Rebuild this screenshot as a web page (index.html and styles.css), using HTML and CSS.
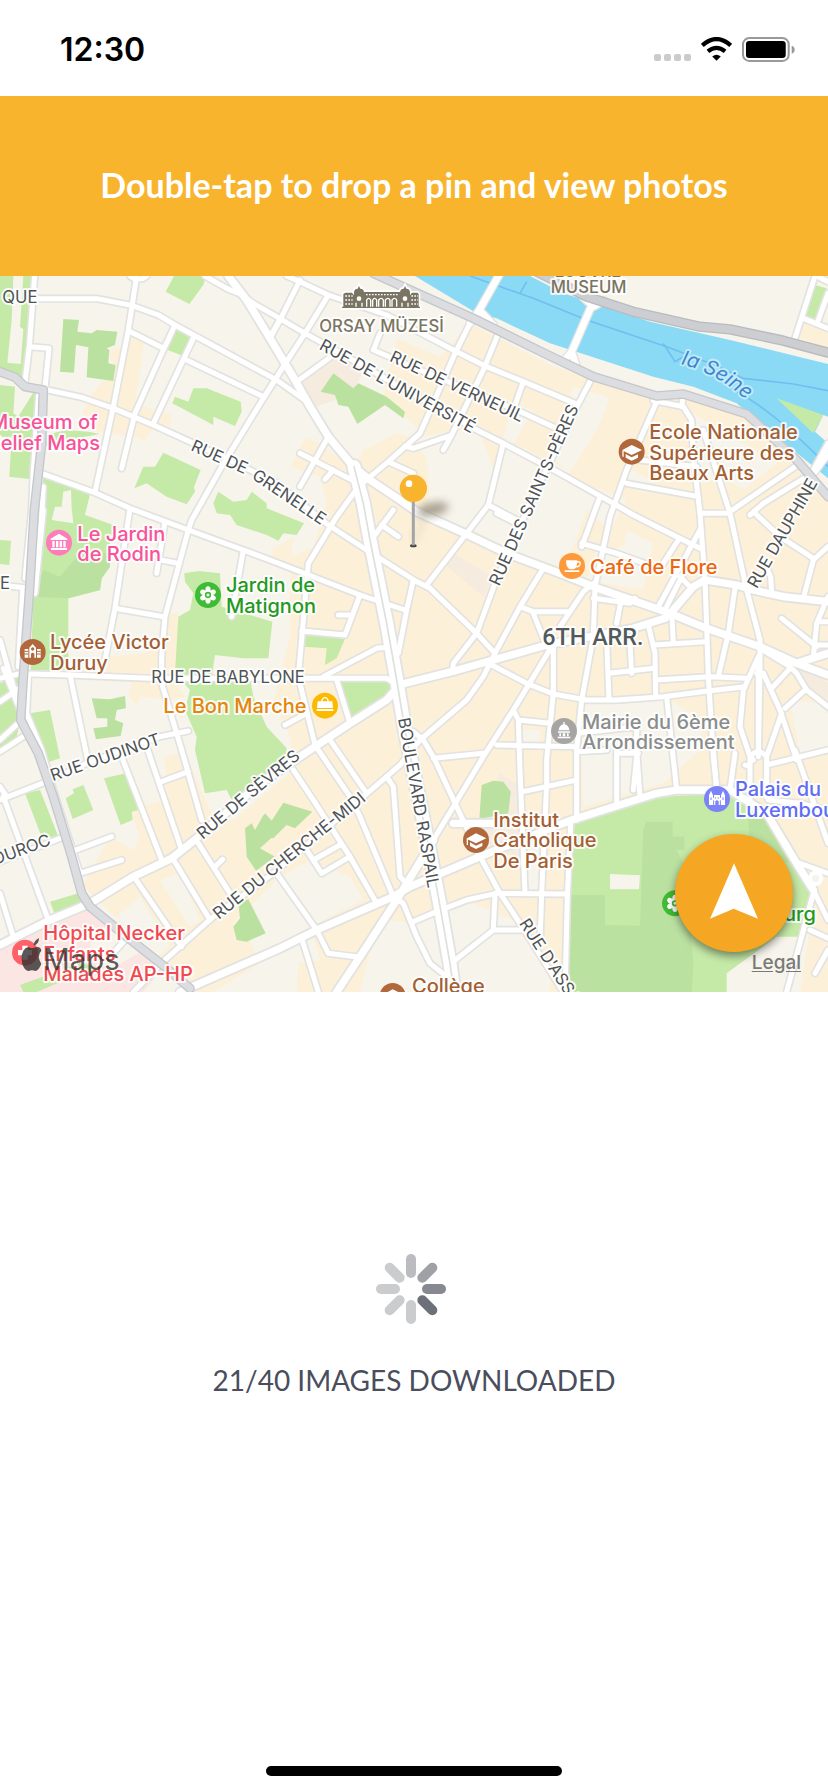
FILE: index.html
```html
<!DOCTYPE html>
<html lang="en">
<head>
<meta charset="utf-8">
<meta name="viewport" content="width=device-width, initial-scale=1">
<title>Map photos</title>
<link rel="stylesheet" href="styles.css">
</head>
<body>
<div class="app">
  <header class="status-bar">
    <time class="clock">12:30</time>
    <div class="status-icons">
      <svg class="icon-signal" viewBox="0 0 37 7" aria-hidden="true"><g fill="#cbcbcb"><rect width="7" height="7" rx="2"/><rect x="10" width="7" height="7" rx="2"/><rect x="20" width="7" height="7" rx="2"/><rect x="30" width="7" height="7" rx="2"/></g></svg>
      <svg class="icon-wifi" viewBox="0 0 94 72" aria-hidden="true"><path d="M4 25Q47-13 90 25M21 43Q47 22 73 43" fill="none" stroke="#000" stroke-width="13"/><path d="M34 59Q47 48 60 59L47 72Z"/></svg>
      <svg class="icon-battery" viewBox="0 0 160 75" aria-hidden="true"><rect x="3" y="3" width="138" height="69" rx="19" fill="none" stroke="#999" stroke-width="6"/><rect x="12" y="12" width="120" height="51" rx="10"/><path d="M150 26Q159 29 159 38T150 50Z" fill="#999"/></svg>
    </div>
  </header>

  <div class="banner"><h1 class="banner-title">Double-tap to drop a pin and view photos</h1></div>

  <section class="map" aria-label="Map">
    <svg class="map-canvas" viewBox="0 18 2484 2148">
      <defs>
        <g id="minor">
          <path d="M104 0V18L88 230 75 335M104 86H290L395 106 475 135 525 165 830 330 910 387M410 18L385 180 340 410 285 665M385 182L490 235M525 165L490 240 405 430 365 595M580 205L460 460M555 268L790 380M90 230L147 235 135 355M117 360L100 600 95 720 75 925M130 650L125 740 103 970M390 18l12 8h26l12-8"/>
          <path d="M135 358L245 382 340 415 460 465 570 515 700 575 830 640 985 765 1100 840 1245 932 1290 955"/>
          <path d="M825 330L790 385 665 590 575 750 565 780 495 1040 485 1160V1240L545 1440 605 1650M110 605L285 668 390 715 565 780 730 840 810 870 1080 975 1215 1020M390 715L345 1015 315 1170M345 1015L490 1040M495 755L470 910M483 870L535 880M730 840L695 1040"/>
          <path d="M615 18L680 55 720 72 760 100 830 140 910 187 960 215 1430 480 1510 520 1680 610 1840 700 1900 735 2030 800 2100 835M840 150L810 205"/>
          <path d="M860 18L900 35 985 75 1160 135 1370 245 1460 290 1570 335 1725 400M900 30L845 140 810 200M985 75L915 190 850 290 790 385M890 335L1000 255M1140 190L1120 240 1260 300 1550 420 1680 480"/>
          <path d="M1415 150L1365 250 1300 400 1260 490 1165 575 1075 650 1010 740 925 880 895 1220 945 1425 1050 1580 1080 1640 1180 1880M1495 190L1450 300 1355 495 1330 540M1355 495L1240 535 1215 528M1570 335L1540 420M1510 520L1465 705 1400 790 1280 945M1465 705L1550 750M1490 730L1540 755M900 550L1075 640M985 500L900 650M1000 600L975 628M1165 575L1240 610"/>
          <path d="M1180 720L1110 815M1145 765L1195 800M1240 930L1220 1020 1195 1150M1080 975L1035 1095 905 1083M1015 1035H1048M1175 1130L1130 1135 970 1220"/>
          <path d="M0 1225L60 1211 210 1215 450 1225 910 1225H1160L1195 1245M1010 1230L1050 1360M855 1365L920 1330"/>
          <path d="M1290 955L1430 1090 1485 1150 1475 1185 1580 1240 1660 1272 1760 1290H1850L1990 1280 2130 1262 2235 1250M1770 335L1720 430 1590 700 1485 940 1430 1090 1360 1180 1358 1200M1630 895L1560 1010 1490 1140 1450 1220 1400 1290 1260 1410 1200 1485 1160 1520 1090 1580 820 1810 640 1940 500 2065 400 2166"/>
          <path d="M1560 1010L1600 1025H1710M1600 1030L1640 1130M1780 940L1750 965 1680 1070M1655 1130L1540 1320 1450 1460 1360 1610 1300 1710M1660 1130V1270L1640 1470V1540L1625 1870 1620 2020M1540 1320L1555 1350 1560 1500 1575 1870M1555 1350L1650 1360M1490 1425L1730 1430M1240 1385L1270 1410 1300 1460 1370 1610 1440 1760 1500 1870 1560 1960 1690 2166M1300 1465L1450 1450M990 1410L1100 1570M880 1500L940 1590 1050 1760 1130 1900"/>
          <path d="M1160 1520L1180 1550 1200 1820 1230 1850M1180 1880L1210 1900 1250 2000 1290 2080 1340 2120M1240 1955L1310 1925 1400 1890 1490 1870 1700 1872M1485 1870L1480 1980H1570M1480 1980L1340 2090M830 1810L950 1980 985 2050 1080 2062M905 2005L955 2166M940 1770L1020 1725M920 1740L965 1810 1050 1760M1570 1565L1730 1530"/>
          <path d="M1970 395L1880 600 1830 740 1785 950 1780 1100 1745 1290 1730 1440V1650M1712 1660L1702 1880 1695 2166M1960 392L2050 410 2075 450 2080 560 2100 730 2115 930 2120 1070 2125 1220 2140 1460 2150 1555M2050 380L2045 410M1800 680L1745 830M1745 820L1850 850 1960 890M1880 640L2095 680M1920 570L2090 590M2110 480L2190 730 2240 960 2280 1110V1200L2275 1460M2190 730H2100M2190 725L2400 580M2484 520L2440 600M2250 735L2290 700 2420 620M2260 725L2340 800 2440 865M2484 830L2440 870 2410 985M2290 870L2312 920 2315 970M2100 780L1975 1010M2050 910L2000 1010M2035 810L1990 880M2040 920L2075 955M1780 985L1890 1000 1905 985M1865 980L1850 1060"/>
          <path d="M2015 1025L2020 1120M1960 1125L2120 1115M1945 1065L1965 1150 1967 1280M1820 1110L1827 1290M1890 1120L1895 1210M1827 1210L1960 1195M1965 1230L2130 1220 2240 1225M2205 955L2185 1090 2155 1220M2345 1045L2450 1130M2484 980L2450 1060 2440 1160M2460 1055H2484M2450 1125H2484M2280 1135L2370 1190 2390 1210 2420 1260 2484 1310M2370 1195L2315 1255M2270 1210H2290L2340 1320 2390 1470M2415 1260L2355 1315M2275 1160L2230 1260 2220 1370 2250 1460 2260 1470M2275 1180V1450M2345 1330L2300 1460M2250 1620V1460Q2275 1430 2300 1460V1580M1900 1560L1910 1460M1920 1580L1910 1440M1850 1600V1440M1850 1450H1915M2000 1280L2030 1560M2190 1560L2205 1450M2140 1440L2150 1560M1730 1390L1910 1370M1910 1370V1440M2385 1440L2484 1720M2300 1485L2484 1440M2235 1485L2250 1490M2305 1590L2400 1600 2484 1620"/>
          <path d="M2445 18L2385 205M2450 18L2484 35M2410 145L2484 175M2484 70L2455 150M2440 1870L2360 2166M2430 1980L2484 2005M2484 2040L2445 2110M2440 1860L2484 1950M2400 1780L2484 1810M1820 1440L1730 1445"/>
          <path d="M85 1220L80 1330 125 1440 160 1560 240 1810M68 960L55 1190M0 945L85 955M130 720L105 970M0 1110L20 1180 60 1320M10 1195L60 1320M0 1295L65 1250M0 1410L65 1350M0 1445L70 1400M210 1215L265 1480M440 1430L545 1740M370 1450L365 1460 485 1770M485 1535L565 1505M565 1383L480 1400 260 1480 140 1535 0 1590M515 1760L630 1950M595 1720L690 1870M645 1790L668 1768M405 1825L545 2030M215 1745L335 1700M240 1810L365 1770M180 1705L0 1775M10 1580L145 1950M0 1870L40 2000M0 1550L20 1580M375 2010L330 2060"/>
        </g>
        <g id="major">
          <path d="M685 18L740 90 810 205 885 330 930 410 985 500 1060 590 1110 630 1200 690 1250 725 1405 795 1520 850 1680 910 1780 950 1910 995 2010 1030 2120 1075 2280 1130 2390 1180 2484 1215M1195 1245L1355 1205 1480 1170 1640 1125 1900 1075 1995 1045 2020 1020 2080 950 2115 930 2210 945 2260 960 2350 980 2484 995M1195 1250L1160 1290 1050 1360 870 1480 780 1540 590 1705 515 1765 400 1820 270 1900 150 1950 0 2025M1490 1660L1360 1660M1300 1710L1190 1890 1080 2060 1010 2166M540 2166L840 2035 950 1980 1180 1880 1230 1850 1440 1760 1650 1675 1715 1650 1970 1570 2030 1560 2190 1560 2300 1630 2390 1780 2440 1860M2390 1180L2484 1150"/>
        </g>
        <path id="raspail" d="M1062 590L1090 700 1110 810 1160 1060 1190 1230 1215 1380 1290 1750 1315 1880 1350 2080 1362 2166"/>
        <path id="quai" d="M0 305L45 322 75 350 130 360 125 520 103 720 88 970 70 1220 62 1350 115 1450 160 1580 215 1760 245 1870 270 1910 380 2000 500 2095 570 2155M1120 10L1420 145 1650 258 1780 320 1970 378 2050 372 2240 432 2390 570 2484 680"/>
        <path id="rive" d="M1600 0L1760 80 1900 125 2100 170 2190 178 2350 212 2484 248"/>
        <path id="bridges" d="M1500 10L1438 120 1410 160M1438 120L1480 165M1780 95L1715 245 1690 275M1715 245L1728 285M1750 82L1780 110 1812 92M2484 550L2440 610"/>
        <path id="seine" d="M2042 282Q2160 312 2250 402L2310 470"/>
        <g id="cap" fill="#fff"><path d="M-29-4L0-20 31-5 0 10Z"/><path d="M-18 7L0 17 19 8V18L0 27-18 18Z"/><path d="M-26-3V15" stroke="#fff" stroke-width="4"/></g>
        <g id="flower"><g fill="#fff"><ellipse cy="-15" rx="8" ry="11"/><ellipse cy="-15" rx="8" ry="11" transform="rotate(60)"/><ellipse cy="-15" rx="8" ry="11" transform="rotate(120)"/><ellipse cy="-15" rx="8" ry="11" transform="rotate(180)"/><ellipse cy="-15" rx="8" ry="11" transform="rotate(240)"/><ellipse cy="-15" rx="8" ry="11" transform="rotate(300)"/><circle r="13"/></g><circle r="7" fill="none" stroke="#3fbb35" stroke-width="5"/></g>
        <filter id="soft" x="-50%" y="-50%" width="200%" height="200%"><feGaussianBlur stdDeviation="12"/></filter>
      </defs>

      <rect class="land" y="18" width="2484" height="2148"/>

      <g class="shops">
        <path d="M1190 205L1320 260 1410 160 1650 285 1960 385 2050 375 2240 440 2484 690V2166H2400L2440 1900 2200 1570 1720 1650 1700 2166H1640L1560 1960 1420 1900 1240 1960 1170 1950 1120 2010 1080 2166H890L895 2080 960 2070 930 1970 830 1830 700 1960 740 1990 780 2080 640 2166H560L500 2090 410 2000 250 1850 260 1820 330 1700 400 1740 420 1700 390 1620 490 1590 500 1500 560 1460 640 1640 700 1650 880 1500 870 1400 820 1300 870 1100 870 860 940 830 980 700 960 620 870 590 915 505 960 520 1060 600 1090 540 1190 490 1230 500 1285 570 1420 740 1500 750 1450 600 1300 520 1150 380Z"/>
        <path d="M390 195L432 220 405 400 515 435 508 475 455 480 435 513 400 500 290 485 250 430 265 385 310 330 345 280 330 270V240L375 230ZM505 1030H535V1250L555 1280 510 1290 420 1280 415 1310 385 1280 395 1235 320 1210 330 1160 430 1150 480 1130ZM490 1460L545 1445 550 1500 500 1510ZM2400 150L2484 190V235L2400 205ZM820 835L880 800 870 900 810 880Z"/>
      </g>
      <path class="land" d="M1720 350L1830 385 1790 480 1700 620 1880 690 1830 780 1760 720 1690 910 1500 840 1440 790 1290 740 1285 600 1260 500 1380 480 1440 490 1480 600 1540 400 1600 420 1540 520 1700 600 1660 560ZM2060 420L2160 480 2330 580 2230 660 2170 620 2100 640 2090 480ZM1880 590L1950 630 1940 670 1870 650ZM1880 780L1960 820 1930 960 1760 930 1790 840 1870 830ZM1740 1300L2000 1285 2100 1350 2110 1430 1990 1540 1750 1610ZM2370 1300L2484 1290V1440L2400 1450ZM1330 2090L1500 1960 1560 1970 1650 2130V2166H1370ZM1240 1970L1320 1950 1370 2120 1290 2060ZM1560 1380H1620V1430H1560ZM1580 1660H1620V1860H1580ZM830 1830L930 1770 1050 1820 1090 1890 950 1960ZM350 1940L420 1880 510 2030 470 2060ZM480 1830L540 1810 600 1950 570 1970Z"/>
      <path fill="#f5ebdf" d="M890 340L1000 260 1090 300 1060 370 950 410 920 400ZM1330 880L1360 850 1480 920 1450 980ZM2390 1210L2410 1185 2484 1240V1330ZM1450 1620L1500 1510 1560 1550 1570 1760 1440 1740Z"/>

      <g class="park">
        <path d="M0 18H40L35 150 22 278 62 282 70 178 60 170 70 18H98L75 330 0 300ZM0 345L45 350 40 430 55 440 105 360 117 365 95 628 28 620 35 500 0 500ZM135 495L200 480 265 485 300 492 200 510 130 530Z"/>
        <path d="M525 180L578 200 550 258 503 240ZM522 18H618L610 45 568 102 497 65ZM517 400L525 380 565 395 580 355H620L722 395 725 425 705 468 640 440V465ZM403 655L430 590H465L490 548 602 600 582 650 585 665 560 703 500 680 440 640ZM640 700L655 665 700 695 740 690 755 665 800 700V715L912 760 890 795 850 790 835 812 800 795 710 765 690 735 650 730Z"/>
        <path d="M130 625L270 672 255 735 340 765 325 850 330 890 305 925 300 960 205 985 205 1200 92 1200 100 980 120 750ZM0 810L33 812 28 885 0 882ZM0 1240L60 1215 62 1350 45 1420 0 1450Z"/>
        <path d="M553 910L595 903 660 910 665 1010 817 1055 805 1165H730L645 1155 635 1220 750 1225 760 1280 800 1370 860 1435 855 1470 780 1540 700 1600 680 1560 615 1570 585 1440 590 1400 555 1320 570 1260 525 1210 535 1040 570 1020 580 970 555 935Z"/>
        <path d="M910 1090L1040 1095 1010 1165 975 1185 980 1135 910 1130ZM1020 1235H1160L1180 1250 1160 1285 1055 1350ZM90 1330L150 1320 180 1465 135 1480 110 1440ZM75 1570L120 1560 175 1700 125 1702ZM312 1525L378 1510 415 1620 395 1625 398 1650 362 1665ZM197 1585L222 1570 218 1558 250 1545 280 1620 218 1647ZM150 1895L240 1868 250 1905 165 1935ZM2285 1130L2385 1170 2370 1182 2290 1150ZM2445 45L2480 55 2450 155 2415 145ZM1712 1660L1970 1580 2190 1570 2300 1630 2440 1860 2400 2000H2330L2180 2110V2166H1700Z"/>
      </g>
      <g class="park-deep">
        <path d="M190 147L237 150 232 185 275 190 290 180 352 185 345 225 320 235 328 240 325 280 347 285 340 333 260 322 265 232 228 225 222 308 180 305ZM1000 310L1060 355 1075 340 1160 380 1215 425 1210 445 1155 405 1072 462 1045 410 1015 405 1005 375 962 365ZM1445 1545L1480 1532 1510 1535 1532 1565 1525 1630 1438 1647ZM275 1285L330 1288 375 1278 378 1315 350 1320 345 1350 370 1360 362 1398 288 1408 280 1375 322 1370V1345H290ZM735 1675L755 1660 770 1690 760 1690 795 1630 840 1680 780 1735 825 1760 768 1802 740 1760ZM790 1635L810 1660 850 1598 937 1625 885 1675 860 1665 820 1705 760 1690ZM700 1970L720 1945 715 1900 745 1888 797 1990 740 2015 710 2010ZM130 900L180 920 240 850 325 850 330 890 305 925 300 960 205 985 100 980Z"/>
        <path d="M1940 1655H2018V1700H2053V1740H2030L2060 1800 2070 1940 2080 2090 2075 2166H1705L1710 1875H1815V1965L1920 1967 1930 1680ZM2245 1640H2300L2390 1780 2250 1770Z"/>
      </g>
      <path class="land" d="M190 665L213 660 215 715 220 760 155 750 165 710 185 710ZM1830 1812L1920 1816 1917 1858H1830Z"/>
      <path fill="#fce6e4" d="M0 2025L260 1905 500 2080 430 2166H0Z"/>
      <path class="land" d="M270 2020L340 1970 430 2040 330 2100 290 2080Z"/>
      <path class="park" d="M60 2145L240 2080 290 2090 110 2166H70Z"/>

      <path fill="#8adaf6" d="M1245 18L1430 130 1490 145 1650 220 1960 320 2080 350 2210 400 2330 500 2484 625V282L2190 210 1950 155 1770 95 1690 70 1590 18Z"/>
      <path class="park" d="M2330 385L2470 435 2440 490Z"/>
      <path class="land" d="M2470 435L2484 440V520L2445 485Z"/>
      <path d="M1410 18L1600 85 1760 150 2000 230 2130 280 2230 325 2380 342 2484 362M1990 220L2025 275 2050 260M2200 360Q2320 420 2484 590M1560 70L1580 35" fill="none" stroke="#6fc0ef" stroke-width="5"/>

      <g class="road-casing">
        <use href="#minor" stroke-width="25"/><use href="#major" stroke-width="33"/><use href="#raspail" stroke-width="50"/><use href="#bridges" stroke-width="28"/>
      </g>
      <g class="road-fill">
        <use href="#minor" stroke-width="15"/><use href="#major" stroke-width="22"/><use href="#raspail" stroke-width="39"/><use href="#bridges" stroke-width="20"/>
      </g>
      <use href="#raspail" class="line" stroke="#dde0dc" stroke-width="5"/>
      <use href="#quai" class="line" stroke="#c5c7cb" stroke-width="29"/>
      <use href="#quai" class="line" stroke="#dcdde1" stroke-width="21"/>
      <use href="#rive" class="line" stroke="#b9bbbf" stroke-width="31"/>
      <use href="#rive" class="line" stroke="#cdced2" stroke-width="23"/>
      <circle cx="2447" cy="1825" r="17" fill="#f7f4ec" stroke="#fff" stroke-width="12"/>

      <g class="street">
        <text x="7" y="98">QUE</text>
        <text x="0" y="957">E</text>
        <text transform="translate(570 540) rotate(24)">RUE DE</text>
        <text transform="translate(753 624) rotate(34)">GRENELLE</text>
        <text transform="translate(955 236) rotate(29)">RUE DE L'UNIVERSITÉ</text>
        <text transform="translate(1166 272) rotate(25)">RUE DE VERNEUIL</text>
        <text transform="translate(1498 950) rotate(-66)">RUE DES SAINTS-PÈRES</text>
        <text transform="translate(2270 958) rotate(-60)">RUE DAUPHINE</text>
        <text x="454" y="1239">RUE DE BABYLONE</text>
        <text transform="translate(158 1534) rotate(-19)">RUE OUDINOT</text>
        <text transform="translate(608 1710) rotate(-40)">RUE DE SÈVRES</text>
        <text transform="translate(656 1950) rotate(-39)">RUE DU CHERCHE-MIDI</text>
        <text transform="translate(1194 1346) rotate(80)">BOULEVARD RASPAIL</text>
        <text transform="translate(-14 1785) rotate(-20)">DUROC</text>
        <text transform="translate(1556 1960) rotate(57)">RUE D'ASSAS</text>
      </g>
      <text class="water-name"><textPath href="#seine">la Seine</textPath></text>

      <g class="poi landmark">
        <text x="958" y="186">ORSAY MÜZESİ</text>
        <text x="1664" y="22">LOUVRE</text>
        <text x="1652" y="70">MUSEUM</text>
      </g>
      <g transform="translate(1026 48)" fill="#7a7462" stroke="#fff" stroke-width="10" paint-order="stroke">
        <path d="M0 66V62H4V24L10 20H30L36 28V20Q36 8 47 8L51 0 55 8Q66 8 66 20V18H174V20Q174 8 185 8L189 0 193 8Q204 8 204 20V28L210 20H226L230 24V62H234V66Z"/>
      </g>
      <path transform="translate(1026 48)" d="M10 30H32M10 42H32M10 54H32M208 30H228M208 42H228M208 54H228M72 26H168" fill="none" stroke="#fff" stroke-width="4" stroke-dasharray="5 4"/>
      <path transform="translate(1026 48)" d="M74 62V42Q80 32 86 42V62M92 62V42Q98 32 104 42V62M110 62V42Q118 32 124 42V62M130 62V42Q138 32 144 42V62M150 62V42Q158 32 164 42V62M42 62V50M60 62V50M180 62V50M198 62V50" fill="none" stroke="#fff" stroke-width="4"/>
      <g transform="translate(1026 48)" fill="#fff"><circle cx="51" cy="38" r="7"/><circle cx="189" cy="38" r="7"/></g>

      <text class="district" x="1627" y="1126">6TH ARR.</text>

      <g class="poi museum"><text x="-30" y="478">Museum of</text><text x="-36" y="540">Relief Maps</text><text x="232" y="812">Le Jardin</text><text x="232" y="874">de Rodin</text></g>
      <g class="poi school"><text x="1948" y="507">Ecole Nationale</text><text x="1948" y="569">Supérieure des</text><text x="1948" y="631">Beaux Arts</text><text x="150" y="1138">Lycée Victor</text><text x="150" y="1200">Duruy</text><text x="1480" y="1670">Institut</text><text x="1480" y="1732">Catholique</text><text x="1480" y="1794">De Paris</text><text x="1236" y="2168">Collège</text></g>
      <g class="poi garden"><text x="678" y="967">Jardin de</text><text x="678" y="1029">Matignon</text><text x="2088" y="1953">Luxembourg</text></g>
      <g class="poi shop"><text x="490" y="1330">Le Bon Marche</text></g>
      <g class="poi cafe"><text x="1770" y="911">Café de Flore</text></g>
      <g class="poi civic"><text x="1746" y="1376">Mairie du 6ème</text><text x="1746" y="1438">Arrondissement</text></g>
      <g class="poi palace"><text x="2205" y="1578">Palais du</text><text x="2205" y="1640">Luxembourg</text></g>

      <g class="badge" transform="translate(1895 545)"><circle r="39" fill="#b1693c"/><use href="#cap"/></g>
      <g class="badge" transform="translate(1428 1710)"><circle r="39" fill="#b1693c"/><use href="#cap"/></g>
      <g class="badge" transform="translate(1178 2178)"><circle r="39" fill="#b1693c"/><use href="#cap"/></g>
      <g class="badge" transform="translate(98 1146)"><circle r="39" fill="#b1693c"/><path fill="#fff" fill-rule="evenodd" d="M-24-9H-13V17H-24ZM13-9H24V17H13ZM-10 17V-13L0-24 10-13V17H5V5Q0-1-5 5V17ZM0-14A5 5 0 1 0 .1-14Z"/><path d="M-24-2H-13M-24 6H-13M13-2H24M13 6H24" stroke="#b1693c" stroke-width="3"/></g>
      <g class="badge" transform="translate(177 818)"><circle r="39" fill="#ff7cbb"/><path fill="#fff" d="M-25-12L0-27 25-12V-8H-25ZM-20-5H-13V14H-20ZM-9-5H-2V14H-9ZM2-5H9V14H2ZM13-5H20V14H13ZM-24 16H24V22H-24Z"/></g>
      <g class="badge" transform="translate(624 975)"><circle r="39" fill="#3fbb35"/><use href="#flower"/></g>
      <g class="badge" transform="translate(2025 1900)"><circle r="39" fill="#3fbb35"/><use href="#flower"/></g>
      <g class="badge" transform="translate(975 1307)"><circle r="39" fill="#fdb900"/><path fill="#fff" d="M-22-13H22L24 7H-24ZM-25 10H25V16H-25Z"/><path d="M-10-12Q-8-24 0-24T10-12" fill="none" stroke="#fff" stroke-width="4"/></g>
      <g class="badge" transform="translate(1716 888)"><circle r="39" fill="#ff9a3c"/><path fill="#fff" d="M-18-17H16Q16 10 3 10H-6Q-18 6-18-17ZM-22 13H22V18H-22Z"/><path d="M15-12Q28-15 24-4 20 4 11 2" fill="none" stroke="#fff" stroke-width="4"/></g>
      <g class="badge" transform="translate(1692 1383)"><circle r="39" fill="#a6a5a3"/><path fill="#fff" d="M-2-27H2V-20Q15-16 16-2H-16Q-15-16-2-20ZM-18 1H18V5H-18ZM-14 7H-9V16H-14ZM-4 7H4V16H-4ZM9 7H14V16H9ZM-19 17H19V22H-19Z"/></g>
      <g class="badge" transform="translate(2151 1587)"><circle r="39" fill="#7c83f7"/><path fill="#fff" d="M-24 18V-11L-18-25-12-11V-4H-9V-12H9V-4H12V-11L18-25 24-11V18H5V7Q0 0-5 7V18Z"/><path d="M-18-5V3M18-5V3M-4-5V-1M4-5V-1M-10 4V18M10 4V18" stroke="#7c83f7" stroke-width="3"/></g>
      <g class="badge" transform="translate(75 2048)"><circle r="39" fill="#ff6169"/><path fill="#fff" d="M-8-21H8V-8H21V8H8V21H-8V8H-21V-8H-8Z"/></g>
      <g class="poi hospital"><text x="130" y="2010">Hôpital Necker</text><text x="130" y="2072">Enfants</text><text x="130" y="2134">Malades AP-HP</text></g>

      <g class="brand">
        <path d="M101 2027Q101 2012 117 2004 117 2022 101 2027ZM113 2031Q122 2031 124 2042 109 2057 124 2082 115 2103 106 2103 96 2098 86 2103 74 2103 67 2082 60 2050 76 2035 85 2029 95 2035 103 2032 113 2031Z"/>
        <text x="130" y="2101">Maps</text>
      </g>

      <ellipse cx="1298" cy="718" rx="48" ry="20" fill="#8c8370" opacity=".75" filter="url(#soft)" transform="rotate(-12 1298 718)"/>
      <path d="M1241 815L1270 745" stroke="#8c8370" stroke-width="12" opacity=".2" filter="url(#soft)"/>
      <ellipse cx="1240" cy="827" rx="10" ry="5" fill="#444"/>
      <path d="M1240 690V826" stroke="#a2a4a8" stroke-width="9"/>
      <circle cx="1240" cy="655" r="41" fill="#f8b42c"/>
      <circle cx="1227" cy="641" r="10" fill="#fff"/>
    </svg>
    <a class="legal" href="#legal">Legal</a>
    <button class="locate" type="button" aria-label="Center on my location">
      <svg class="locate-icon" viewBox="0 0 144 166" aria-hidden="true"><path d="M72 0L144 166 71 136 0 166Z" fill="#fff"/></svg>
    </button>
  </section>

  <main class="loader">
    <svg class="spinner" viewBox="0 0 228 210" aria-hidden="true">
      <g transform="translate(105 105)" stroke-width="30" stroke-linecap="round">
        <path d="M0-48V-90" stroke="#bbbcc0"/><path d="M34-34L64-64" stroke="#a0a1a6"/><path d="M48 0H90" stroke="#868a90"/><path d="M34 34L64 64" stroke="#6c7078"/><path d="M0 48V90M-34 34L-64 64M-48 0H-90M-34-34L-64-64" stroke="#cbccce"/>
      </g>
    </svg>
    <p class="progress" role="status">21/40 IMAGES DOWNLOADED</p>
  </main>
  <div class="home-indicator"></div>
</div>
</body>
</html>
```
FILE: styles.css
```css
* { box-sizing: border-box; }

body {
  margin: 0;
  background: #fff;
  font-family: Inter, "Liberation Sans", sans-serif;
}

.app {
  display: flex;
  flex-direction: column;
  min-height: 100vh;
}

.status-bar {
  display: flex;
  align-items: center;
  justify-content: space-between;
  height: 96px;
  padding: 2px 33px 0 60px;
}

.clock {
  font-size: 32px;
  font-weight: 600;
  color: #000;
}

.status-icons {
  display: flex;
  align-items: center;
  gap: 10px;
}

.icon-signal {
  width: 37px;
  height: 7px;
  margin-top: 16px;
}

.icon-wifi { width: 31px; height: 24px; }
.icon-battery { width: 53px; height: 25px; }

.banner {
  display: flex;
  align-items: center;
  justify-content: center;
  min-height: 180px;
  padding: 22px 24px 24px;
  background: #f8b42c;
}

.banner-title {
  margin: 0;
  font-family: Lato, sans-serif;
  font-size: 34px;
  font-weight: 700;
  line-height: 40px;
  color: #fff;
  text-align: center;
}

.map {
  position: relative;
  overflow: hidden;
}

.map-canvas {
  display: block;
  width: 100%;
}

.land { fill: #f7f4ec; }
.shops { fill: #fdf0d8; }
.park { fill: #c5e9a6; }
.park-deep { fill: #bbe1a1; }

.road-casing,
.road-fill,
.line {
  fill: none;
  stroke-linecap: round;
  stroke-linejoin: round;
}

.road-casing { stroke: #e2e3e1; }
.road-fill { stroke: #fff; }

.street,
.poi,
.water-name,
.district {
  paint-order: stroke;
  stroke: #fff;
  stroke-opacity: 0.85;
  stroke-width: 12px;
  stroke-linejoin: round;
}

.street {
  font-size: 50px;
  fill: #4e5355;
}

.poi {
  font-size: 60px;
  font-weight: 500;
}

.landmark { font-size: 50px; fill: #7a7462; }
.museum { fill: #f8529b; }
.school { fill: #a35f33; }
.garden { fill: #23991d; }
.shop { fill: #e3850f; }
.cafe { fill: #ed6710; }
.civic { fill: #8b8c8c; }
.palace { fill: #5f6cf5; }
.hospital { fill: #ef4a50; }

.water-name {
  font-size: 60px;
  font-style: italic;
  fill: #3d85cc;
  stroke: #c9edfa;
}

.district {
  font-family: Roboto, sans-serif;
  font-size: 70px;
  font-weight: 500;
  fill: #51595c;
}

.brand {
  fill: #303030;
  fill-opacity: 0.8;
  font-size: 88px;
}

.legal {
  position: absolute;
  right: 27px;
  bottom: 18px;
  font-size: 19px;
  line-height: 22px;
  font-weight: 500;
  color: #797a76;
  text-underline-offset: 2px;
}

.locate {
  position: absolute;
  right: 35px;
  bottom: 40px;
  display: flex;
  justify-content: center;
  width: 118px;
  height: 118px;
  padding: 29px 0 0;
  border: 0;
  border-radius: 50%;
  background: #f5a623;
  box-shadow: 0 4px 8px rgba(0, 0, 0, 0.45);
}

.locate-icon { width: 48px; height: 56px; }

.loader {
  display: flex;
  flex: 1;
  flex-direction: column;
  align-items: center;
  padding: 262px 24px 0;
}

.spinner { width: 76px; height: 70px; }

.progress {
  margin: 36px 0 0;
  font-family: Lato, sans-serif;
  font-size: 28px;
  font-weight: 400;
  line-height: 40px;
  color: #4a4e5c;
}

.home-indicator {
  align-self: center;
  width: 296px;
  height: 10px;
  margin-bottom: 16px;
  border-radius: 5px;
  background: #000;
}
```
